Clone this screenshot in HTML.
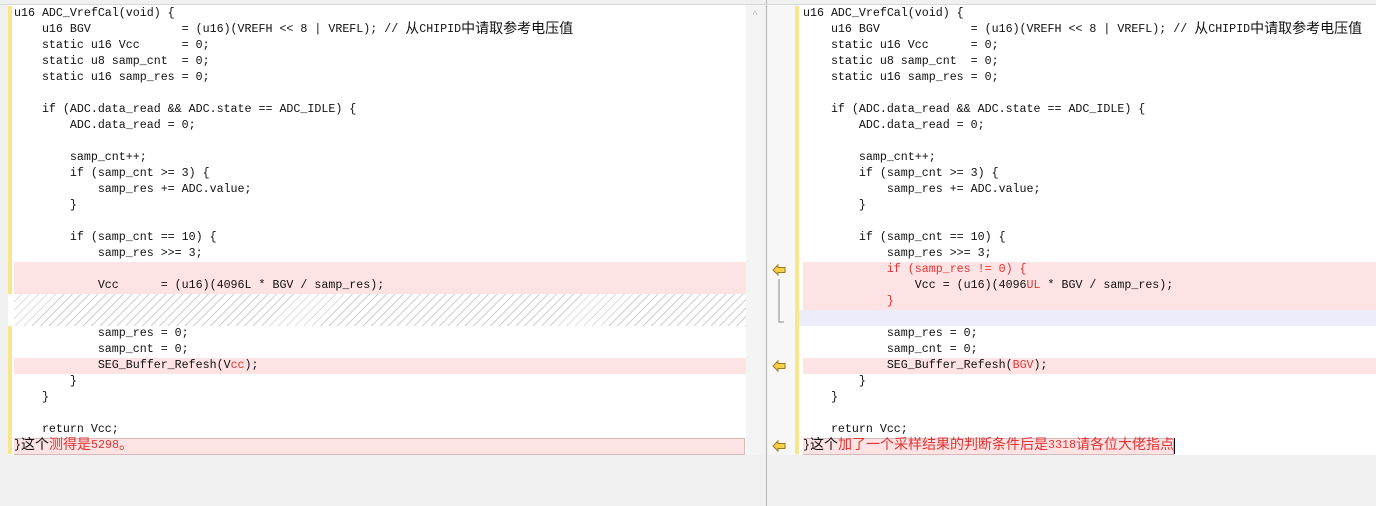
<!DOCTYPE html>
<html><head><meta charset="utf-8"><style>
body{margin:0;width:1376px;height:506px;background:#f0f0f0;position:relative;overflow:hidden;font-family:"Liberation Mono","Noto Sans CJK SC",monospace;font-size:11.65px;color:#111}
.pane{position:absolute;top:5px;height:450px;background:#fff}
.row{position:absolute;height:16px;line-height:16px;white-space:pre}
.pink{background:#fde3e3}
.lav{background:#ececfb}
.r{color:#e53333}
.c{font-family:"Noto Sans CJK SC",sans-serif;font-size:14px;line-height:16px;display:inline-block;vertical-align:top;height:16px;position:relative;top:-2px}
.bar{position:absolute;width:4px;background:#f8e58c}
</style></head><body>
<div class="pane" style="left:8px;width:738px"></div>
<div style="position:absolute;left:746px;top:5px;width:18px;height:450px;background:#f4f4f4"></div>
<div style="position:absolute;left:752px;top:10px;color:#bbb;font-size:10px">^</div>
<div style="position:absolute;left:766px;top:0;width:1px;height:506px;background:#b8b8b8"></div>
<div style="position:absolute;left:768px;top:5px;width:27px;height:450px;background:#f7f7f7"></div>
<div class="pane" style="left:799px;width:577px"></div>
<div style="position:absolute;left:0;top:4px;width:1376px;height:1px;background:#d8d8d8"></div>

<div class="bar" style="left:8px;top:6px;height:288px"></div>
<div class="bar" style="left:8px;top:326px;height:128px"></div>
<div class="bar" style="left:795px;top:6px;height:448px"></div>

<div class="row pink" style="left:14px;width:732px;top:262px"></div>
<div class="row pink" style="left:14px;width:732px;top:278px"></div>
<div style="position:absolute;left:14px;top:294px;width:732px;height:32px;background:repeating-linear-gradient(135deg,#fff 0 5px,#d0d0d0 5px 6px)"></div>
<div class="row pink" style="left:14px;width:732px;top:358px"></div>
<div class="row pink" style="left:14px;width:730px;top:438px;height:15px;border:1px solid #d8b8b8;border-left:none"></div>

<div style="position:absolute;left:14px;top:6px">
<div class="row" style="top:0">u16 ADC_VrefCal(void) {</div>
<div class="row" style="top:16px">    u16 BGV             = (u16)(VREFH &lt;&lt; 8 | VREFL); // <span class="c">从</span>CHIPID<span class="c">中请取参考电压值</span></div>
<div class="row" style="top:32px">    static u16 Vcc      = 0;</div>
<div class="row" style="top:48px">    static u8 samp_cnt  = 0;</div>
<div class="row" style="top:64px">    static u16 samp_res = 0;</div>
<div class="row" style="top:96px">    if (ADC.data_read &amp;&amp; ADC.state == ADC_IDLE) {</div>
<div class="row" style="top:112px">        ADC.data_read = 0;</div>
<div class="row" style="top:144px">        samp_cnt++;</div>
<div class="row" style="top:160px">        if (samp_cnt &gt;= 3) {</div>
<div class="row" style="top:176px">            samp_res += ADC.value;</div>
<div class="row" style="top:192px">        }</div>
<div class="row" style="top:224px">        if (samp_cnt == 10) {</div>
<div class="row" style="top:240px">            samp_res &gt;&gt;= 3;</div>
<div class="row" style="top:272px">            Vcc      = (u16)(4096L * BGV / samp_res);</div>
<div class="row" style="top:320px">            samp_res = 0;</div>
<div class="row" style="top:336px">            samp_cnt = 0;</div>
<div class="row" style="top:352px">            SEG_Buffer_Refesh(V<span class="r">cc</span>);</div>
<div class="row" style="top:368px">        }</div>
<div class="row" style="top:384px">    }</div>
<div class="row" style="top:416px">    return Vcc;</div>
<div class="row" style="top:432px">}<span class="c">这个</span><span class="r"><span class="c">测得是</span>5298<span class="c">。</span></span></div>
</div>

<div class="row pink" style="left:803px;width:573px;top:262px;height:48px"></div>
<div class="row lav" style="left:799px;width:577px;top:310px"></div>
<div class="row pink" style="left:803px;width:573px;top:358px"></div>
<div class="row pink" style="left:803px;width:370px;top:438px;height:15px;border:1px solid #d8b8b8;border-left:none"></div>

<div style="position:absolute;left:803px;top:6px">
<div class="row" style="top:0">u16 ADC_VrefCal(void) {</div>
<div class="row" style="top:16px">    u16 BGV             = (u16)(VREFH &lt;&lt; 8 | VREFL); // <span class="c">从</span>CHIPID<span class="c">中请取参考电压值</span></div>
<div class="row" style="top:32px">    static u16 Vcc      = 0;</div>
<div class="row" style="top:48px">    static u8 samp_cnt  = 0;</div>
<div class="row" style="top:64px">    static u16 samp_res = 0;</div>
<div class="row" style="top:96px">    if (ADC.data_read &amp;&amp; ADC.state == ADC_IDLE) {</div>
<div class="row" style="top:112px">        ADC.data_read = 0;</div>
<div class="row" style="top:144px">        samp_cnt++;</div>
<div class="row" style="top:160px">        if (samp_cnt &gt;= 3) {</div>
<div class="row" style="top:176px">            samp_res += ADC.value;</div>
<div class="row" style="top:192px">        }</div>
<div class="row" style="top:224px">        if (samp_cnt == 10) {</div>
<div class="row" style="top:240px">            samp_res &gt;&gt;= 3;</div>
<div class="row r" style="top:256px">            if (samp_res != 0) {</div>
<div class="row" style="top:272px">                Vcc = (u16)(4096<span class="r">UL</span> * BGV / samp_res);</div>
<div class="row r" style="top:288px">            }</div>
<div class="row" style="top:320px">            samp_res = 0;</div>
<div class="row" style="top:336px">            samp_cnt = 0;</div>
<div class="row" style="top:352px">            SEG_Buffer_Refesh(<span class="r">BGV</span>);</div>
<div class="row" style="top:368px">        }</div>
<div class="row" style="top:384px">    }</div>
<div class="row" style="top:416px">    return Vcc;</div>
<div class="row" style="top:432px">}<span class="c">这个</span><span class="r"><span class="c">加了一个采样结果的判断条件后是</span>3318<span class="c">请各位大佬指点</span></span></div>
</div>
<div style="position:absolute;left:1174px;top:438px;width:1px;height:16px;background:#000"></div>

<svg style="position:absolute;left:770px;top:262px" width="20" height="120">
<path d="M3 8 L8 3 L8 5.5 L15 5.5 L15 10.5 L8 10.5 L8 13 Z" fill="#f5d24a" stroke="#9a7a20" stroke-width="1"/>
<path d="M9 17 V60 H14" fill="none" stroke="#888"/>
<path d="M3 104 L8 99 L8 101.5 L15 101.5 L15 106.5 L8 106.5 L8 109 Z" fill="#f5d24a" stroke="#9a7a20" stroke-width="1"/>
</svg>
<svg style="position:absolute;left:770px;top:438px" width="20" height="16">
<path d="M3 8 L8 3 L8 5.5 L15 5.5 L15 10.5 L8 10.5 L8 13 Z" fill="#f5d24a" stroke="#9a7a20" stroke-width="1"/>
</svg>
</body></html>
